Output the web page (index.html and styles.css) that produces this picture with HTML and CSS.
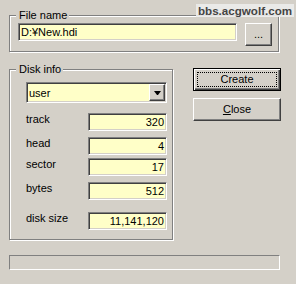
FILE: index.html
```html
<!DOCTYPE html>
<html>
<head>
<meta charset="utf-8">
<link rel="stylesheet" href="styles.css">
</head>
<body>
<div class="dlg">
  <div class="group file-group">
    <span class="legend">File name</span>
    <div class="field path">D:¥New.hdi</div>
    <button class="btn browse">...</button>
  </div>
  <div class="middle">
    <div class="group disk-group">
      <span class="legend">Disk info</span>
      <div class="combo">
        <span class="combo-text">user</span>
        <span class="drop"><svg width="7" height="4" viewBox="0 0 7 4"><polygon points="0,0 7,0 4,4 3,4" fill="#000"/></svg></span>
      </div>
      <div class="rows">
        <span class="label">track</span><div class="field num">320</div>
        <span class="label">head</span><div class="field num">4</div>
        <span class="label">sector</span><div class="field num">17</div>
        <span class="label">bytes</span><div class="field num">512</div>
        <span class="label">disk size</span><div class="field num">11,141,120</div>
      </div>
    </div>
    <div class="actions">
      <button class="btn action default"><span class="focus">Create</span></button>
      <button class="btn action"><u>C</u>lose</button>
    </div>
  </div>
  <div class="progress"></div>
</div>
<div class="watermark">bbs.acgwolf.com</div>
</body>
</html>
```
FILE: styles.css
```css
body {
  margin: 0;
  width: 296px;
  height: 284px;
  background: #d4d0c8;
  font-family: "Liberation Sans", Arial, sans-serif;
  font-size: 11px;
  color: #000;
  position: relative;
  overflow: hidden;
}
.dlg {
  padding: 15px 0 0 9px;
}
.group {
  position: relative;
  box-sizing: border-box;
  border: 1px solid #808080;
  box-shadow: inset 1px 1px #fff, 1px 1px #fff;
}
.legend {
  position: absolute;
  top: -7px;
  left: 6px;
  padding: 0 2px 0 3px;
  background: #d4d0c8;
  line-height: 13px;
  white-space: nowrap;
}
.file-group {
  width: 270px;
  height: 37px;
  padding: 7px 0 0 8px;
  display: flex;
  gap: 8px;
  align-items: flex-start;
}
.field {
  box-sizing: border-box;
  height: 18px;
  background: #ffffc8;
  border: 1px solid;
  border-color: #808080 #fff #fff #808080;
  box-shadow: inset 1px 1px #404040, inset -1px -1px #d4d0c8;
  padding: 1px 2px 0 2px;
  line-height: 15px;
  white-space: nowrap;
}
.path {
  width: 219px;
}
.btn {
  box-sizing: border-box;
  margin: 0;
  padding: 0;
  font: inherit;
  line-height: 13px;
  color: #000;
  background: #d4d0c8;
  border: 1px solid;
  border-color: #fff #404040 #404040 #fff;
  box-shadow: inset -1px -1px #808080;
}
.browse {
  width: 27px;
  height: 23px;
}
.middle {
  display: flex;
  align-items: flex-start;
  margin-top: 17px;
}
.disk-group {
  width: 164px;
  height: 171px;
  padding: 12px 0 0 16px;
}
.combo {
  box-sizing: border-box;
  width: 141px;
  height: 21px;
  display: flex;
  background: #ffffc8;
  border: 1px solid;
  border-color: #808080 #fff #fff #808080;
  box-shadow: inset 1px 1px #404040, inset -1px -1px #d4d0c8;
  padding: 1px;
}
.combo-text {
  flex: 1;
  padding-left: 1px;
  line-height: 19px;
}
.drop {
  box-sizing: border-box;
  width: 16px;
  height: 17px;
  background: #d4d0c8;
  border: 1px solid;
  border-color: #fff #404040 #404040 #fff;
  box-shadow: inset -1px -1px #808080;
  display: flex;
  align-items: center;
  justify-content: center;
}
.drop svg {
  display: block;
}
.rows {
  display: grid;
  grid-template-columns: 62px 79px;
  grid-template-rows: 24px 21px 24px 30px 18px;
  margin-top: 10px;
  align-items: start;
}
.label {
  line-height: 13px;
}
.num {
  text-align: right;
}
.actions {
  margin-left: 20px;
  margin-top: -1px;
  display: flex;
  flex-direction: column;
  gap: 7px;
}
.action {
  width: 88px;
  height: 23px;
}
.default {
  border: 1px solid #000;
  box-shadow: inset 1px 1px #fff, inset -1px -1px #404040, inset -2px -2px #808080;
  padding: 3px;
}
.focus {
  display: block;
  box-sizing: border-box;
  width: 100%;
  height: 100%;
  border: 1px dotted #000;
  line-height: 13px;
}
.progress {
  box-sizing: border-box;
  width: 271px;
  height: 15px;
  margin-top: 15px;
  border: 1px solid;
  border-color: #808080 #fff #fff #808080;
}
.watermark {
  position: absolute;
  top: 4px;
  left: 196px;
  padding: 0 2px;
  background: rgba(236, 236, 234, 0.92);
  color: #444;
  font-weight: bold;
  font-size: 11.6px;
  line-height: 13px;
}
```
